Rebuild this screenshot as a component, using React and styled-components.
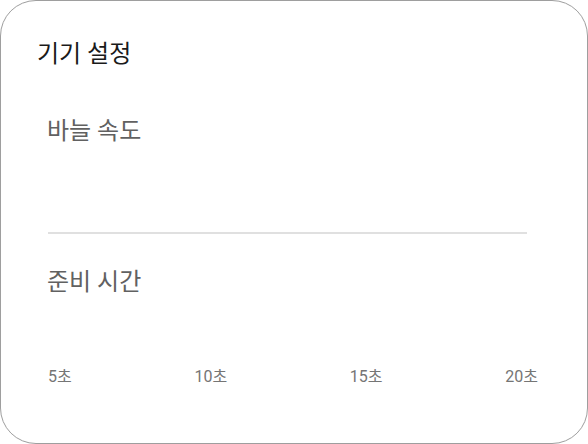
import styled, { createGlobalStyle } from "styled-components";

const GlobalStyle = createGlobalStyle`
  body {
    margin: 0;
    background: #ffffff;
    font-family: Roboto, "Noto Sans CJK KR", sans-serif;
  }
`;

const Card = styled.div`
  box-sizing: border-box;
  width: 588px;
  height: 444px;
  border: 1px solid #9e9e9e;
  border-radius: 36px;
  background: #ffffff;
  display: flex;
  flex-direction: column;
  padding-top: 37px;
`;

const Title = styled.div`
  padding-left: 36px;
  font-size: 24px;
  line-height: 32px;
  color: #1a1a1a;
  font-family: Roboto, "Noto Sans CJK KR", sans-serif;
`;

const Section = styled.div`
  display: flex;
  flex-direction: column;
  padding: 0 60px 0 46px;
  margin-top: ${({ $top }) => $top}px;
`;

const Label = styled.div`
  font-size: 24px;
  line-height: 32px;
  color: #616161;
  font-family: Roboto, "Noto Sans CJK KR", sans-serif;
`;

const SliderArea = styled.div`
  height: ${({ $h }) => $h}px;
`;

const Divider = styled.div`
  height: 2px;
  margin-left: 1px;
  background: #e0e0e0;
`;

const Ticks = styled.div`
  display: flex;
  justify-content: space-between;
  margin-left: 1px;
  margin-right: -11px;
`;

const Tick = styled.span`
  font-size: 16px;
  line-height: 20px;
  color: #757575;
  font-family: Roboto, "Noto Sans CJK KR", sans-serif;
`;

export default function App() {
  return (
    <>
      <GlobalStyle />
      <Card>
        <Title>기기 설정</Title>
        <Section $top={45}>
          <Label>바늘 속도</Label>
          <SliderArea $h={85} />
          <Divider />
        </Section>
        <Section $top={32}>
          <Label>준비 시간</Label>
          <SliderArea $h={69} />
          <Ticks>
            {["5초", "10초", "15초", "20초"].map((t) => (
              <Tick key={t}>{t}</Tick>
            ))}
          </Ticks>
        </Section>
      </Card>
    </>
  );
}
